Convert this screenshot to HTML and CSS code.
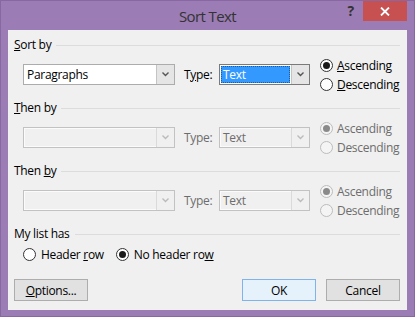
FILE: index.html
```html
<!DOCTYPE html>
<html lang="en">
<head>
    <meta charset="UTF-8">
    <title>Sort Text</title>
    <link rel="stylesheet" href="styles.css">
</head>
<body>
    <div class="window">
        <div class="titlebar">
            <div></div>
            <div class="title">Sort Text</div>
            <div class="controls">
                <span class="help">?</span>
                <span class="close">
                    <svg width="10" height="9" viewBox="0 0 10 9"><path d="M1 0.5 L9 8.5 M9 0.5 L1 8.5" stroke="#fff" stroke-width="1.8" fill="none"/></svg>
                </span>
            </div>
        </div>
        <div class="panel">
            <div class="group">
                <div class="group-title"><span><u>S</u>ort by</span><span class="rule"></span></div>
                <div class="sort-row">
                    <div class="combo combo-key">
                        <span class="combo-value">Paragraphs</span>
                        <span class="combo-btn"><svg width="7" height="5" viewBox="0 0 7 5"><path d="M0.5 0.5 L3.5 3.5 L6.5 0.5" stroke="#555" stroke-width="1.4" fill="none"/></svg></span>
                    </div>
                    <span class="type-label">T<u>y</u>pe:</span>
                    <div class="combo combo-type focused">
                        <span class="combo-value"><span class="selected">Text</span></span>
                        <span class="combo-btn"><svg width="7" height="5" viewBox="0 0 7 5"><path d="M0.5 0.5 L3.5 3.5 L6.5 0.5" stroke="#555" stroke-width="1.4" fill="none"/></svg></span>
                    </div>
                    <div class="order">
                        <div class="option"><span class="radio checked"></span><span><u>A</u>scending</span></div>
                        <div class="option"><span class="radio"></span><span><u>D</u>escending</span></div>
                    </div>
                </div>
            </div>

            <div class="group">
                <div class="group-title"><span><u>T</u>hen by</span><span class="rule"></span></div>
                <div class="sort-row disabled">
                    <div class="combo combo-key">
                        <span class="combo-value"></span>
                        <span class="combo-btn"><svg width="7" height="5" viewBox="0 0 7 5"><path d="M0.5 0.5 L3.5 3.5 L6.5 0.5" stroke="#bbb" stroke-width="1.4" fill="none"/></svg></span>
                    </div>
                    <span class="type-label">Type:</span>
                    <div class="combo combo-type">
                        <span class="combo-value">Text</span>
                        <span class="combo-btn"><svg width="7" height="5" viewBox="0 0 7 5"><path d="M0.5 0.5 L3.5 3.5 L6.5 0.5" stroke="#bbb" stroke-width="1.4" fill="none"/></svg></span>
                    </div>
                    <div class="order">
                        <div class="option"><span class="radio checked"></span><span>Ascending</span></div>
                        <div class="option"><span class="radio"></span><span>Descending</span></div>
                    </div>
                </div>
            </div>

            <div class="group">
                <div class="group-title"><span>Then <u>b</u>y</span><span class="rule"></span></div>
                <div class="sort-row disabled">
                    <div class="combo combo-key">
                        <span class="combo-value"></span>
                        <span class="combo-btn"><svg width="7" height="5" viewBox="0 0 7 5"><path d="M0.5 0.5 L3.5 3.5 L6.5 0.5" stroke="#bbb" stroke-width="1.4" fill="none"/></svg></span>
                    </div>
                    <span class="type-label">Type:</span>
                    <div class="combo combo-type">
                        <span class="combo-value">Text</span>
                        <span class="combo-btn"><svg width="7" height="5" viewBox="0 0 7 5"><path d="M0.5 0.5 L3.5 3.5 L6.5 0.5" stroke="#bbb" stroke-width="1.4" fill="none"/></svg></span>
                    </div>
                    <div class="order">
                        <div class="option"><span class="radio checked"></span><span>Ascending</span></div>
                        <div class="option"><span class="radio"></span><span>Descending</span></div>
                    </div>
                </div>
            </div>

            <div class="group">
                <div class="group-title"><span>My list has</span><span class="rule"></span></div>
                <div class="list-row">
                    <div class="option"><span class="radio"></span><span>Header <u>r</u>ow</span></div>
                    <div class="option"><span class="radio checked"></span><span>No header ro<u>w</u></span></div>
                </div>
            </div>

            <div class="buttons">
                <button class="btn btn-options"><u>O</u>ptions...</button>
                <button class="btn btn-default">OK</button>
                <button class="btn">Cancel</button>
            </div>
        </div>
    </div>
</body>
</html>
```

FILE: styles.css
```css
body {
    margin: 0;
    font-family: "Segoe UI", "Open Sans", sans-serif;
    font-size: 12px;
    letter-spacing: -0.3px;
    color: #000;
}
.window {
    width: 415px;
    height: 317px;
    box-sizing: border-box;
    background-color: #9b7cb4;
    border: 1px solid #8867a3;
    padding: 0 7px;
}
.titlebar {
    height: 29px;
    display: grid;
    grid-template-columns: 1fr auto 1fr;
    align-items: center;
}
.title {
    font-size: 15px;
    letter-spacing: -0.6px;
    color: #333;
}
.controls {
    justify-self: end;
    align-self: start;
    display: flex;
    align-items: center;
}
.help {
    font-size: 14px;
    font-weight: bold;
    color: #333;
    line-height: 20px;
    margin-right: 9px;
}
.close {
    width: 44px;
    height: 20px;
    background-color: #c75050;
    display: flex;
    align-items: center;
    justify-content: center;
}
.panel {
    background-color: #f0f0f0;
    padding: 7px 7px 9px 6px;
}
.group + .group {
    margin-top: 6px;
}
.group-title {
    display: flex;
    align-items: center;
    height: 16px;
    line-height: 16px;
}
.rule {
    flex: 1;
    height: 1px;
    background-color: #dcdcdc;
    margin-left: 5px;
}
.sort-row {
    display: flex;
    align-items: flex-start;
    height: 38px;
    margin-top: 3px;
    padding-left: 9px;
}
.combo {
    display: flex;
    flex-shrink: 0;
    height: 21px;
    box-sizing: border-box;
    margin-top: 8px;
    border: 1px solid #acacac;
    background-color: #fff;
}
.combo-key {
    width: 152px;
}
.combo-type {
    width: 91px;
}
.combo-value {
    flex: 1;
    padding-left: 3px;
    line-height: 19px;
    white-space: nowrap;
}
.combo-btn {
    width: 17px;
    border-left: 1px solid #c4c4c4;
    background-color: #e5e5e5;
    display: flex;
    align-items: center;
    justify-content: center;
}
.focused {
    border-color: #7a7a7a;
}
.focused .combo-value {
    padding: 1px;
    display: flex;
}
.selected {
    flex: 1;
    background-color: #3399ff;
    color: #fff;
    line-height: 17px;
    padding-left: 2px;
    outline: 1px dotted #1c5d9e;
    outline-offset: -1px;
}
.type-label {
    flex-shrink: 0;
    width: 35px;
    margin: 8px 0 0 9px;
    line-height: 21px;
}
.order {
    flex-shrink: 0;
    margin-left: 10px;
}
.option {
    display: flex;
    align-items: center;
    height: 19px;
    white-space: nowrap;
}
.radio {
    flex-shrink: 0;
    width: 13px;
    height: 13px;
    box-sizing: border-box;
    border: 1px solid #333;
    border-radius: 50%;
    background-color: #fff;
    margin-right: 4px;
    display: flex;
    align-items: center;
    justify-content: center;
}
.radio.checked::after {
    content: "";
    width: 7px;
    height: 7px;
    border-radius: 50%;
    background-color: #1a1a1a;
}
.disabled {
    color: #6d6d6d;
}
.disabled .combo {
    border-color: #c2c2c2;
    background-color: #f0f0f0;
    box-shadow: inset 0 0 0 1px #fbfbfb;
}
.disabled .combo-btn {
    background-color: #f0f0f0;
    border-left-color: #dadada;
}
.disabled .radio {
    border-color: #bcbcbc;
    background-color: #f4f4f4;
}
.disabled .radio.checked::after {
    background-color: #8a8a8a;
}
.list-row {
    display: flex;
    align-items: center;
    height: 19px;
    margin-top: 3px;
    padding-left: 9px;
}
.list-row .radio {
    margin-right: 5px;
}
.list-row .option + .option {
    margin-left: 12px;
}
.buttons {
    display: flex;
    gap: 10px;
    margin-top: 15px;
}
.btn {
    width: 74px;
    height: 22px;
    box-sizing: border-box;
    border: 1px solid #adadad;
    background-color: #e1e1e1;
    font-family: inherit;
    font-size: 12px;
    letter-spacing: -0.3px;
    color: #000;
    padding: 0;
}
.btn-options {
    margin-right: auto;
}
.btn-default {
    border-color: #7eb4ea;
    background-color: #e5f1fb;
}
```
